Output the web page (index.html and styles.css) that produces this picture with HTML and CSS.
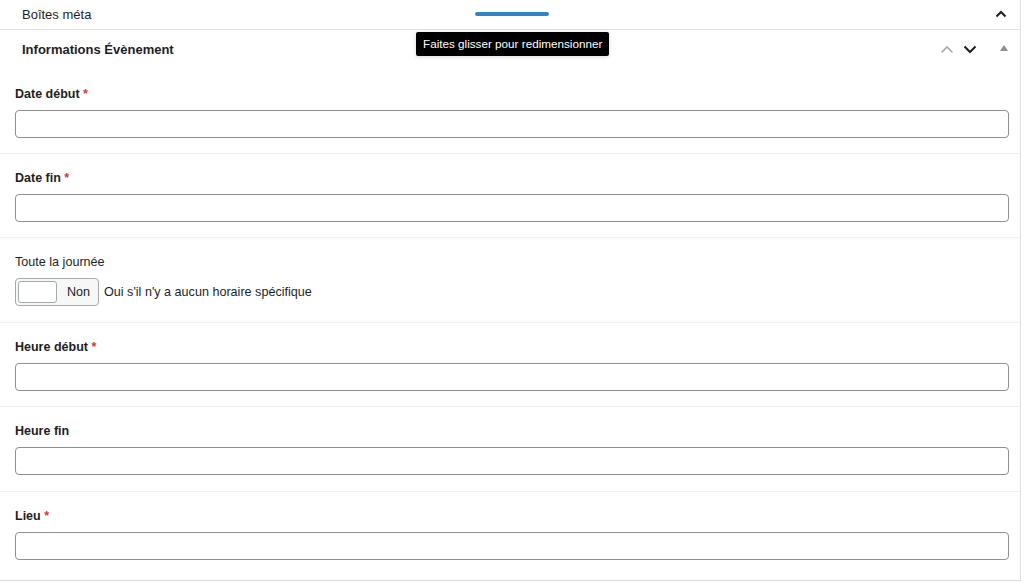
FILE: index.html
```html
<!DOCTYPE html>
<html lang="fr">
<head>
    <meta charset="UTF-8">
    <title>Boîtes méta</title>
    <link rel="stylesheet" href="styles.css">
</head>
<body>
    <div class="panel">
        <div class="topbar">
            <div class="topbar-title">Boîtes méta</div>
            <div class="handle"></div>
            <div class="topbar-actions">
                <svg width="12" height="8" viewBox="0 0 12 8"><path d="M1.5 6.5 L6 2 L10.5 6.5" fill="none" stroke="#1e1e1e" stroke-width="2"/></svg>
            </div>
        </div>

        <div class="box-header">
            <div class="box-title">Informations Évènement</div>
            <div class="box-actions">
                <svg class="icon-up" width="14" height="9" viewBox="0 0 14 9"><path d="M1.5 7.5 L7 2 L12.5 7.5" fill="none" stroke="#a7aaad" stroke-width="1.6"/></svg>
                <svg class="icon-down" width="14" height="9" viewBox="0 0 14 9"><path d="M1.5 1.5 L7 7 L12.5 1.5" fill="none" stroke="#1e1e1e" stroke-width="2"/></svg>
                <svg class="icon-toggle" width="8" height="6" viewBox="0 0 8 6"><path d="M4 0 L8 6 L0 6 Z" fill="#8c8f94"/></svg>
            </div>
            <div class="tooltip">Faites glisser pour redimensionner</div>
        </div>

        <div class="field">
            <label class="field-label">Date début <span class="req">*</span></label>
            <input class="field-input" type="text">
        </div>
        <div class="field">
            <label class="field-label">Date fin <span class="req">*</span></label>
            <input class="field-input" type="text">
        </div>
        <div class="field">
            <label class="field-label plain">Toute la journée</label>
            <div class="switch-row">
                <div class="switch">
                    <span class="switch-knob"></span>
                    <span class="switch-text">Non</span>
                </div>
                <span class="switch-desc">Oui s'il n'y a aucun horaire spécifique</span>
            </div>
        </div>
        <div class="field">
            <label class="field-label">Heure début <span class="req">*</span></label>
            <input class="field-input" type="text">
        </div>
        <div class="field">
            <label class="field-label">Heure fin</label>
            <input class="field-input" type="text">
        </div>
        <div class="field">
            <label class="field-label">Lieu <span class="req">*</span></label>
            <input class="field-input" type="text">
        </div>
    </div>
</body>
</html>
```

FILE: styles.css
```css
* {
    margin: 0;
    padding: 0;
    box-sizing: border-box;
}
body {
    background-color: #fff;
    color: #1e1e1e;
    font-family: "Liberation Sans", Arial, sans-serif;
    font-size: 12.6px;
}
.panel {
    width: 1021px;
    border-right: 1px solid #e0e0e0;
    border-bottom: 1px solid #dcdcde;
    padding-bottom: 5px;
}
.topbar {
    height: 30px;
    display: grid;
    grid-template-columns: 1fr auto 1fr;
    align-items: center;
    padding: 0 13px 1px 22px;
    border-bottom: 1px solid #e0e0e0;
}
.topbar-title {
    font-size: 13px;
}
.handle {
    width: 74px;
    height: 4px;
    border-radius: 2px;
    background-color: #3582c4;
    margin-left: -5px;
    margin-bottom: 1px;
}
.topbar-actions {
    display: flex;
    justify-content: flex-end;
}
.box-header {
    position: relative;
    height: 40px;
    display: flex;
    align-items: center;
    justify-content: space-between;
    padding: 0 12px 2px 22px;
}
.box-title {
    font-weight: bold;
    font-size: 13px;
}
.box-actions {
    display: flex;
    align-items: center;
}
.icon-up {
    margin-right: 9px;
}
.icon-down {
    margin-right: 23px;
}
.icon-toggle {
    margin-bottom: 2px;
}
.tooltip {
    position: absolute;
    left: 416px;
    top: 2px;
    background-color: #000;
    color: #fff;
    font-size: 11.7px;
    padding: 5px 7px 6px;
    border-radius: 2px;
    box-shadow: 0 1px 4px rgba(0,0,0,0.15);
    white-space: nowrap;
}
.field {
    padding: 16px 11px 15.5px 15px;
    border-bottom: 1px solid #f0f0f1;
}
.box-header + .field {
    padding-bottom: 14.5px;
}
.field:last-child {
    border-bottom: none;
}
.field-label {
    display: block;
    font-weight: bold;
    font-size: 12.5px;
    line-height: 16px;
    margin-bottom: 8px;
}
.field-label.plain {
    font-weight: normal;
    font-size: 12.6px;
}
.req {
    color: #d63638;
}
.field-input {
    display: block;
    width: 100%;
    height: 28px;
    border: 1px solid #8c8f94;
    border-radius: 4px;
    background-color: #fff;
}
.switch-row {
    display: flex;
    align-items: center;
}
.switch {
    display: flex;
    align-items: center;
    width: 84px;
    height: 28px;
    border: 1px solid #a7aaad;
    border-radius: 4px;
    background-color: #f6f7f7;
    padding: 2px;
}
.switch-knob {
    width: 39px;
    height: 22px;
    border: 1px solid #a7aaad;
    border-radius: 3px;
    background-color: #fff;
}
.switch-text {
    margin-left: 10px;
}
.switch-desc {
    margin-left: 5px;
}
```
